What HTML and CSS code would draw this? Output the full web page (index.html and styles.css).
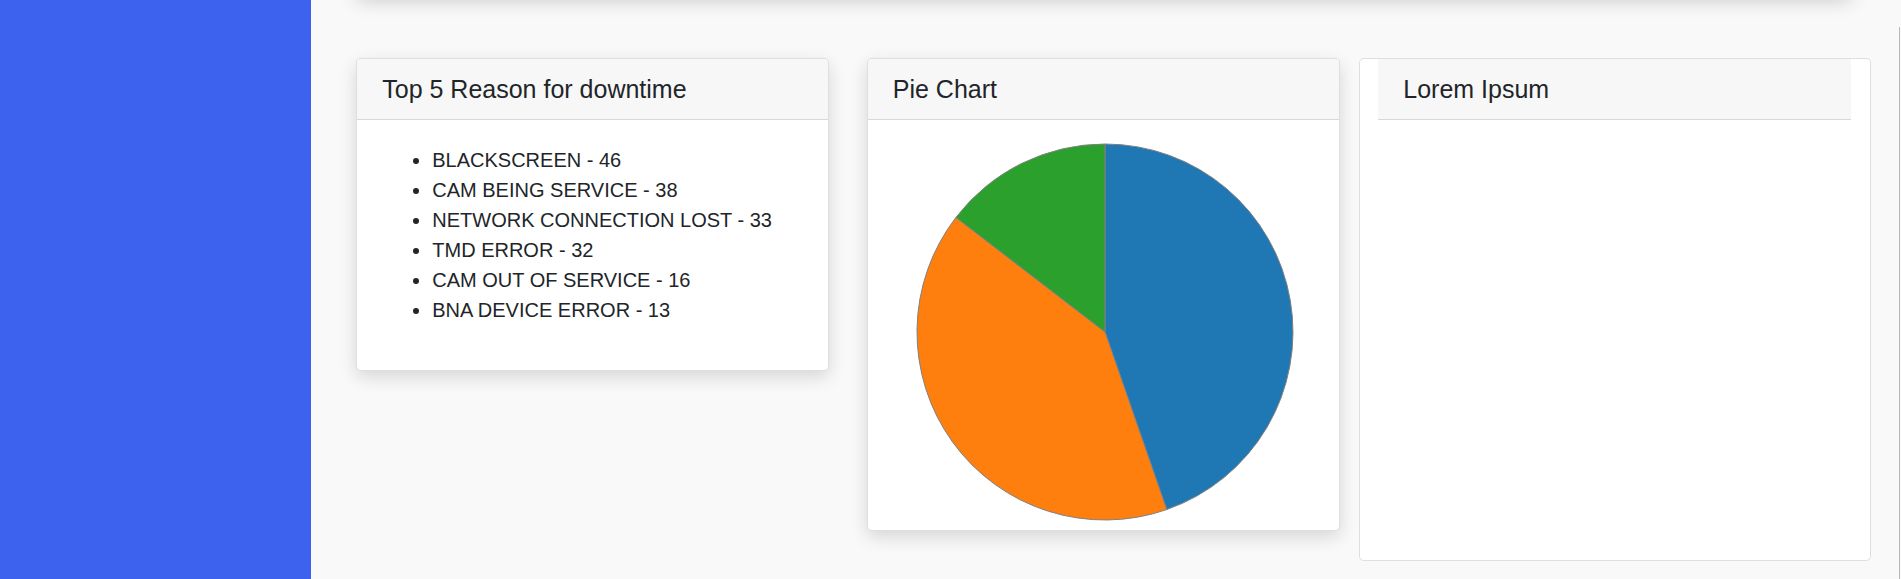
FILE: index.html
```html
<!DOCTYPE html>
<html lang="en">
<head>
<meta charset="utf-8">
<title>Dashboard</title>
<link rel="stylesheet" href="styles.css">
</head>
<body>
<div class="app">
  <aside class="sidebar"></aside>
  <main class="main">
    <div class="top-wrap"><div class="top-card"></div></div>
    <div class="row">
      <div class="col">
        <div class="card">
          <div class="card-header">Top 5 Reason for downtime</div>
          <div class="card-body">
            <ul class="reasons">
              <li>BLACKSCREEN - 46</li>
              <li>CAM BEING SERVICE - 38</li>
              <li>NETWORK CONNECTION LOST - 33</li>
              <li>TMD ERROR - 32</li>
              <li>CAM OUT OF SERVICE - 16</li>
              <li>BNA DEVICE ERROR - 13</li>
            </ul>
          </div>
        </div>
      </div>
      <div class="col">
        <div class="card">
          <div class="card-header">Pie Chart</div>
          <div class="card-body pie-body">
            <svg class="pie" width="378" height="378" viewBox="0 0 378 378">
              <path d="M189,189 L189,1 A188,188 0 0 1 250.73,366.57 Z" fill="#1f77b4" stroke="#808080" stroke-width="1"/>
              <path d="M189,189 L250.73,366.57 A188,188 0 0 1 39.95,74.42 Z" fill="#ff7f0e" stroke="#808080" stroke-width="1"/>
              <path d="M189,189 L39.95,74.42 A188,188 0 0 1 189,1 Z" fill="#2ca02c" stroke="#808080" stroke-width="1"/>
            </svg>
          </div>
        </div>
      </div>
      <div class="col col-bordered">
        <div class="card-header">Lorem Ipsum</div>
        <div class="plain-body"></div>
      </div>
    </div>
  </main>
  <div class="scrollbar"><div class="thumb"></div></div>
</div>
</body>
</html>
```
FILE: styles.css
```css
html, body {
  margin: 0;
  height: 100%;
  overflow: hidden;
}
body {
  font-family: "Liberation Sans", Arial, sans-serif;
  color: #212529;
  background: #f9f9f9;
}
.app {
  display: flex;
  height: 100vh;
}
.sidebar {
  width: 311px;
  flex: none;
  background: #3c62ee;
}
.main {
  flex: 1;
  padding: 0 26px 0 26.5px;
  background: #f9f9f9;
}
.top-wrap {
  padding: 0 18.75px;
  margin-top: -85px;
  margin-bottom: 63px;
}
.top-card {
  height: 80px;
  background: #ffffff;
  border-radius: 5px;
  box-shadow: 0 5px 20px rgba(0, 0, 0, 0.2);
}
.row {
  display: flex;
  align-items: flex-start;
}
.col {
  flex: 1 1 0;
  min-width: 0;
  padding: 0 18.75px;
  box-sizing: border-box;
}
.card {
  background: #ffffff;
  border: 1px solid rgba(0, 0, 0, 0.125);
  border-radius: 5px;
  box-shadow: 0 6px 18px rgba(0, 0, 0, 0.14);
  overflow: hidden;
}
.card-header {
  padding: 15px 25px;
  font-size: 25px;
  line-height: 30px;
  background: #f7f7f7;
  border-bottom: 1px solid rgba(0, 0, 0, 0.125);
}
.card-body {
  padding: 25px;
}
.reasons {
  margin: 0 0 20px;
  padding-left: 50px;
  font-size: 20px;
  line-height: 30px;
}
.pie-body {
  padding: 23px 0 9px 48px;
}
.pie {
  display: block;
}
.col-bordered {
  background: #ffffff;
  border: 1px solid rgba(0, 0, 0, 0.125);
  border-radius: 5px;
}
.plain-body {
  height: 440px;
}
.scrollbar {
  width: 4px;
  flex: none;
  padding-top: 27px;
  box-sizing: border-box;
  background: #f9f9f9;
}
.thumb {
  width: 1px;
  margin-left: 2px;
  height: 100%;
  background: #b8b8b8;
}
```
